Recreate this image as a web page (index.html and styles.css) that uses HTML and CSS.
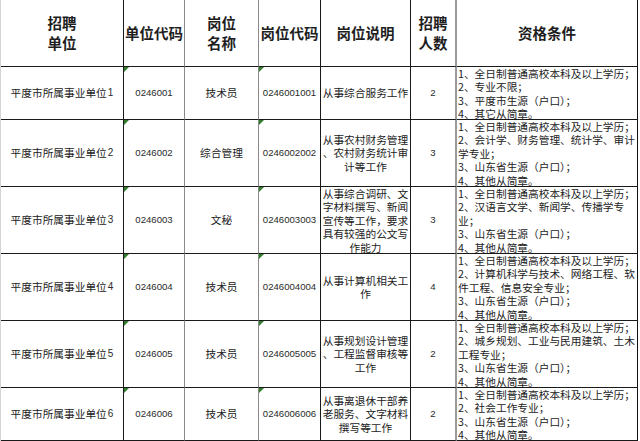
FILE: index.html
```html
<!DOCTYPE html>
<html lang="zh-CN">
<head>
<meta charset="utf-8">
<title>招聘岗位</title>
<link rel="stylesheet" href="styles.css">
</head>
<body>
<div class="sheet">
  <div class="c h k1">招聘<br>单位</div>
  <div class="c h k2">单位代码</div>
  <div class="c h k3">岗位<br>名称</div>
  <div class="c h k4">岗位代码</div>
  <div class="c h k5">岗位说明</div>
  <div class="c h k6">招聘<br>人数</div>
  <div class="c h k7">资格条件</div>

  <div class="c k1">平度市所属事业单位<span class="num">1</span></div>
  <div class="c k2 tri"><span class="num">0246001</span></div>
  <div class="c k3">技术员</div>
  <div class="c k4 tri"><span class="num">0246001001</span></div>
  <div class="c k5">从事综合服务工作</div>
  <div class="c k6"><span class="num">2</span></div>
  <div class="c k7 req"><p>1、全日制普通高校本科及以上学历；</p><p>2、专业不限；</p><p>3、平度市生源（户口）；</p><p>4、其它从简章。</p></div>

  <div class="c k1">平度市所属事业单位<span class="num">2</span></div>
  <div class="c k2 tri"><span class="num">0246002</span></div>
  <div class="c k3">综合管理</div>
  <div class="c k4 tri"><span class="num">0246002002</span></div>
  <div class="c k5">从事农村财务管理<br>、农村财务统计审<br>计等工作</div>
  <div class="c k6"><span class="num">3</span></div>
  <div class="c k7 req"><p>1、全日制普通高校本科及以上学历；</p><p>2、会计学、财务管理、统计学、审计</p><p>学专业；</p><p>3、山东省生源（户口）；</p><p>4、其他从简章。</p></div>

  <div class="c k1">平度市所属事业单位<span class="num">3</span></div>
  <div class="c k2 tri"><span class="num">0246003</span></div>
  <div class="c k3">文秘</div>
  <div class="c k4 tri"><span class="num">0246003003</span></div>
  <div class="c k5 top">从事综合调研、文<br>字材料撰写、新闻<br>宣传等工作，要求<br>具有较强的公文写<br>作能力</div>
  <div class="c k6"><span class="num">3</span></div>
  <div class="c k7 req"><p>1、全日制普通高校本科及以上学历；</p><p>2、汉语言文学、新闻学、传播学专</p><p>业；</p><p>3、山东省生源（户口）；</p><p>4、其他从简章。</p></div>

  <div class="c k1">平度市所属事业单位<span class="num">4</span></div>
  <div class="c k2 tri"><span class="num">0246004</span></div>
  <div class="c k3">技术员</div>
  <div class="c k4 tri"><span class="num">0246004004</span></div>
  <div class="c k5">从事计算机相关工<br>作</div>
  <div class="c k6"><span class="num">4</span></div>
  <div class="c k7 req"><p>1、全日制普通高校本科及以上学历；</p><p>2、计算机科学与技术、网络工程、软</p><p>件工程、信息安全专业；</p><p>3、山东省生源（户口）；</p><p>4、其他从简章。</p></div>

  <div class="c k1">平度市所属事业单位<span class="num">5</span></div>
  <div class="c k2 tri"><span class="num">0246005</span></div>
  <div class="c k3">技术员</div>
  <div class="c k4 tri"><span class="num">0246005005</span></div>
  <div class="c k5">从事规划设计管理<br>、工程监督审核等<br>工作</div>
  <div class="c k6"><span class="num">2</span></div>
  <div class="c k7 req"><p>1、全日制普通高校本科及以上学历；</p><p>2、城乡规划、工业与民用建筑、土木</p><p>工程专业；</p><p>3、山东省生源（户口）；</p><p>4、其他从简章。</p></div>

  <div class="c k1">平度市所属事业单位<span class="num">6</span></div>
  <div class="c k2 tri"><span class="num">0246006</span></div>
  <div class="c k3">技术员</div>
  <div class="c k4 tri"><span class="num">0246006006</span></div>
  <div class="c k5">从事离退休干部养<br>老服务、文字材料<br>撰写等工作</div>
  <div class="c k6"><span class="num">2</span></div>
  <div class="c k7 req"><p>1、全日制普通高校本科及以上学历；</p><p>2、社会工作专业；</p><p>3、山东省生源（户口）；</p><p>4、其他从简章。</p></div>
</div>
</body>
</html>
```
FILE: styles.css
```css
* { box-sizing: border-box; }
html, body {
  margin: 0;
  padding: 0;
  background: #ffffff;
}
body {
  width: 640px;
  height: 441px;
  overflow: hidden;
  font-family: "Noto Sans CJK SC", "Noto Sans", sans-serif;
  color: #222222;
}
.sheet {
  display: grid;
  grid-template-columns: 123px 61px 74px 62px 90px 46px 181px;
  grid-template-rows: 67px 53px 67px 67px 67px 67px 53px;
  width: 638px;
  border-left: 1px solid #d4d4d4;
}
.c {
  position: relative;
  display: flex;
  align-items: center;
  justify-content: center;
  text-align: center;
  overflow: hidden;
  white-space: nowrap;
  border-bottom: 1px solid #1a1a1a;
  border-right: 1px solid #1a1a1a;
  font-size: 10.7px;
  line-height: 13.4px;
}
.c.top { align-items: flex-start; }
.k2, .k3 { border-right-color: #8a8a8a; }
.k6 { border-right: 2px solid #9a9a9a; }
.k7 { border-right-color: #111111; }
.h {
  font-size: 14.5px;
  line-height: 20px;
  font-weight: 700;
  color: #1e1e1e;
}
.num {
  font-family: "Liberation Sans", Arial, sans-serif;
  font-size: 9.6px;
  color: #2a2a2a;
}
.k1 .num { font-size: 10px; margin-left: 1px; }
.req {
  display: block;
  text-align: left;
  padding-left: 1px;
}
.req p {
  margin: 0;
  height: 13.4px;
  line-height: 13.4px;
}
.tri::before {
  content: "";
  position: absolute;
  left: 0;
  top: 0;
  width: 0;
  height: 0;
  border-top: 5px solid #2f7d2a;
  border-right: 5px solid transparent;
}
```
